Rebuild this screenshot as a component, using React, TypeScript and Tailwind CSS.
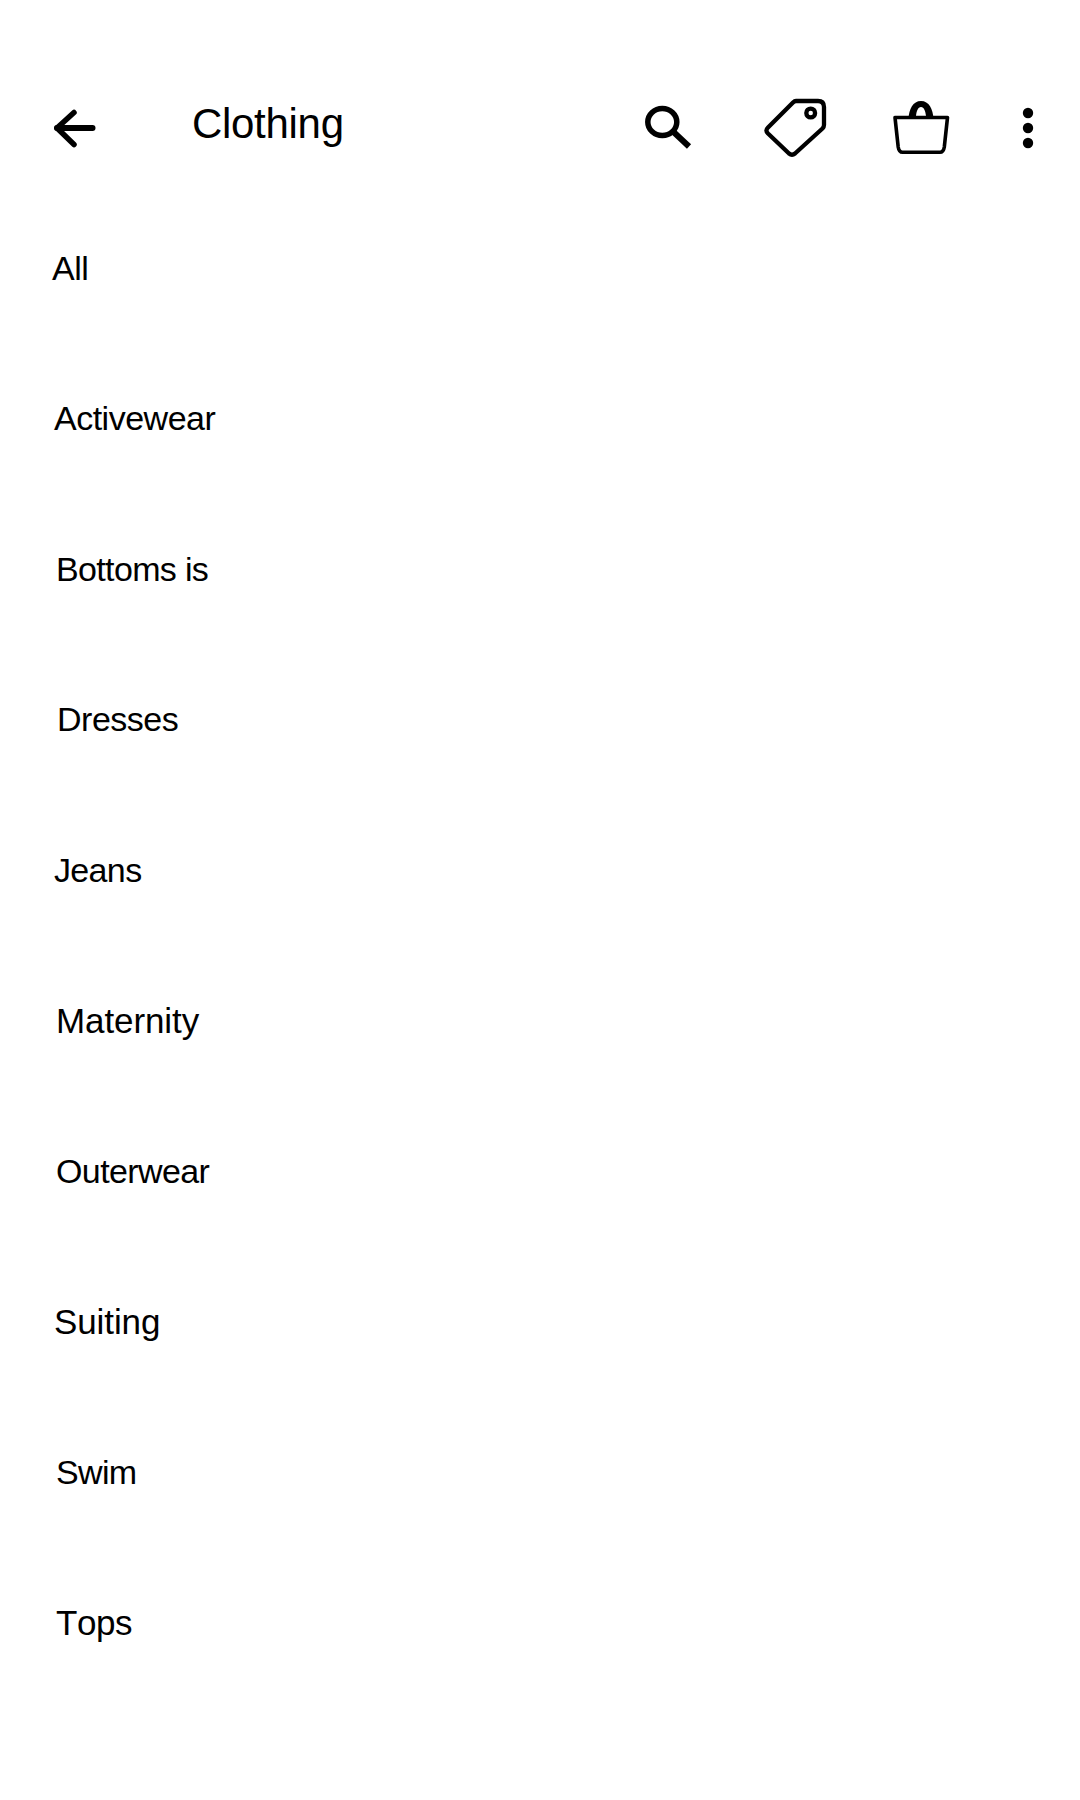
const items = [
  { label: "All", cls: "pl-[52px] text-[34px] tracking-[-0.5px]" },
  { label: "Activewear", cls: "pl-[54px] text-[34px] tracking-[-0.5px]" },
  { label: "Bottoms is", cls: "pl-[56px] text-[34px] tracking-[-0.65px]" },
  { label: "Dresses", cls: "pl-[57px] text-[34px] tracking-[-0.5px]" },
  { label: "Jeans", cls: "pl-[54px] text-[34px] tracking-[-0.65px]" },
  { label: "Maternity", cls: "pl-[56px] pt-px text-[35px] tracking-[-0.1px]" },
  { label: "Outerwear", cls: "pl-[56px] text-[34px] tracking-[-0.6px]" },
  { label: "Suiting", cls: "pl-[54px] pt-[2px] text-[35px] tracking-[-0.1px]" },
  { label: "Swim", cls: "pl-[56px] text-[34px] tracking-[-0.65px]" },
  { label: "Tops", cls: "pl-[56px] pt-[2px] text-[35px] tracking-[-0.4px] [font-kerning:none]" },
];

export default function App() {
  return (
    <div className="min-h-[1800px] w-full bg-white font-['Liberation_Sans',sans-serif] text-black">
      <header className="flex h-[193px] pt-[90px]">
        <button aria-label="Back" className="ml-[50px] h-[75px] w-[50px]">
          <svg className="h-[75px] w-[50px]" viewBox="50 90 50 75" fill="none" stroke="currentColor" strokeWidth="5.5" strokeLinejoin="round" strokeLinecap="round">
            <path d="M92.500 128H57" strokeWidth="6" />
            <path d="M74 112.500L57 128L74 144.500" />
          </svg>
        </button>
        <h1 className="ml-[92px] w-[438px] pt-[10px] text-[42px] leading-[48px] tracking-[-0.3px]">Clothing</h1>
        <button aria-label="Search" className="h-[75px] w-[100px]">
          <svg className="h-[75px] w-[100px]" viewBox="630 90 100 75" fill="none" stroke="currentColor" strokeWidth="5.5">
            <ellipse cx="662.3" cy="122" rx="14.5" ry="13.5" />
            <path d="M672.500 131L689 146.500" strokeWidth="6" />
          </svg>
        </button>
        <button aria-label="Offers" className="ml-5 h-[75px] w-[100px]">
          <svg className="h-[75px] w-[100px]" viewBox="750 90 100 75" fill="none" stroke="currentColor" strokeWidth="4.3" strokeLinejoin="round">
            <path d="M796 101H818Q824 101 824 107V125Q824 127 822.500 128.500L795 153.500Q792 156 789 153.500L768 133.500Q765 130.500 768 127.500L793 102.500Q794.500 101 796 101Z" />
            <circle cx="810.7" cy="113" r="4.4" />
          </svg>
        </button>
        <button aria-label="Shopping bag" className="ml-[30px] h-[75px] w-[90px]">
          <svg className="h-[75px] w-[90px]" viewBox="880 90 90 75" fill="none" stroke="currentColor" strokeWidth="3.6" strokeLinejoin="round">
            <path d="M895 117.500H947.500L944.300 147Q943.500 152.300 940 152.300H902.500Q899 152.300 898.200 147Z" />
            <path fill="currentColor" stroke="none" fillRule="evenodd" d="M908.500 119C909 109 913 101 921 101C929 101 933 109 933.500 119ZM916 116H926C925.500 111 924 107 921 107C918 107 916.500 111 916 116Z" />
          </svg>
        </button>
        <button aria-label="More options" className="h-[75px] w-[90px]">
          <svg className="h-[75px] w-[90px]" viewBox="970 90 90 75" fill="currentColor">
            <circle cx="1028" cy="113" r="5.2" />
            <circle cx="1028" cy="128" r="5.2" />
            <circle cx="1028" cy="143" r="5.2" />
          </svg>
        </button>
      </header>
      <main>
        <ul>
          {items.map((i) => (
            <li key={i.label} className="h-[150.5px]">
              <button className={`flex h-[150px] w-full items-center ${i.cls}`}>{i.label}</button>
            </li>
          ))}
        </ul>
      </main>
    </div>
  );
}
